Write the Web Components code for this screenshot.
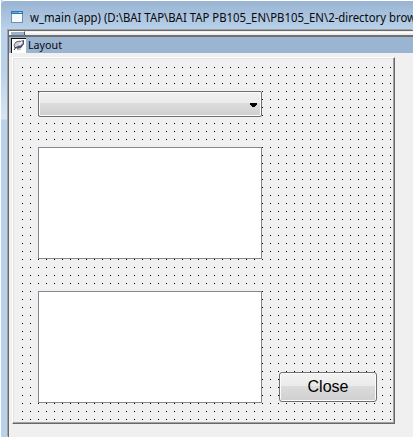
<!DOCTYPE html>
<html lang="en"><head><meta charset="utf-8"><title>w_main</title>
<style>html,body{margin:0;width:413px;height:437px;overflow:hidden;background:#fff}</style></head><body>
<app-window></app-window>
<script>
const define=(name,html)=>customElements.define(name,class extends HTMLElement{
  constructor(){super();this.attachShadow({mode:'open'}).innerHTML=html;}
});
customElements.define('fitted-label',class extends HTMLElement{
  constructor(){super();this.attachShadow({mode:'open'}).innerHTML=`<style>:host{display:block}svg{display:block;overflow:visible}text{font-family:"Noto Sans","Open Sans",sans-serif;font-size:12px;fill:#08080c}</style><svg height="16"><text y="13"></text></svg>`;}
  connectedCallback(){
    const s=this.shadowRoot.querySelector('svg'),t=s.firstChild,w=this.getAttribute('width');
    s.setAttribute('width',w);t.setAttribute('textLength',w);t.setAttribute('lengthAdjust','spacingAndGlyphs');
    if(this.hasAttribute('size'))t.style.fontSize=this.getAttribute('size')+'px';
    t.textContent=this.getAttribute('text');
  }
});
define('title-bar',`<style>:host{display:flex;height:29px;box-sizing:border-box;border-top:1px solid #fff;background:linear-gradient(#98b4d2,#b9d1ea);padding:8px 0 0 10px}
svg{display:block;margin-top:2px;flex:none}fitted-label{margin-left:7px;flex:none}</style>
<svg width="12" height="12" shape-rendering="crispEdges"><rect width="12" height="12" fill="#6d91a8"/><rect width="12" height="3" fill="#2876b4"/><rect x="1" y="1" width="7" height="1" fill="#63a8dc"/><rect x="8" y="1" width="3" height="1" fill="#b5d3eb"/><rect x="1" y="3" width="10" height="8" fill="#f3fafc"/></svg>
<fitted-label width="386" text="w_main (app) (D:\\BAI TAP\\BAI TAP PB105_EN\\PB105_EN\\2-directory brow"></fitted-label>`);
define('tool-strip',`<style>:host{display:block;height:4px;background:linear-gradient(#f0f0f0 0 1px,#fff 1px 2px,#eee 2px)}i{display:block;box-sizing:border-box;width:16px;height:4px;background:#9ab2ce;border:solid;border-width:1px 1px 0 2px;border-color:#fff #555 #555 #fff}</style><i></i>`);
define('layout-header',`<style>:host{display:flex;box-sizing:border-box;height:18px;background:#9ab4d2;border-top:2px solid #707070;padding-top:1px}
svg{display:block;flex:none;margin-left:2px}fitted-label{margin:-2px 0 0 2px}</style>
<svg width="15" height="15"><path fill="#fff" d="M0 0h15v15H0z"/><path fill="#111" d="M0 0h15v1H1v14H0z"/><path d="M3 7l2-3 4-1 1 3-2 3-4 1z" fill="#d0d0cc" stroke="#444" stroke-width=".8"/><path d="M9 3l4-1v4l-3 4-4 1-1-2 4-2z" fill="#4d4f78"/><path d="M9 4l2-1 1 2-3 3-1-1z" fill="#eee"/><path d="M3 12l2-3" stroke="#333"/><path d="M6 12l4-1" stroke="#aaa"/></svg>
<fitted-label width="34" size="11.5" text="Layout"></fitted-label>`);
define('drop-list',`<style>:host{display:flex;box-sizing:border-box;justify-content:flex-end;align-items:center;width:224px;height:26px;border:1px solid #707070;border-radius:2px;box-shadow:inset 0 0 0 1px #fbfbfb;background:linear-gradient(#f2f2f2,#ebebeb 46%,#dcdcdc 47%,#cfcfcf);padding-right:4px}svg{display:block;margin-top:2px}</style><svg width="7" height="4" shape-rendering="crispEdges"><path d="M0 0h7v2H6v1H5v1H2V3H1V2H0z"/></svg>`);
define('list-field',`<style>:host{display:block;box-sizing:border-box;width:224px;height:112px;background:#fff;border:1px solid #828790}</style>`);
define('push-button',`<style>:host{display:flex;box-sizing:border-box;width:98px;height:30px;align-items:center;justify-content:center;border:1px solid #707070;border-radius:3px;box-shadow:inset 0 0 0 1px #fbfbfb;background:linear-gradient(#f2f2f2,#ebebeb 46%,#dcdcdc 47%,#cfcfcf);font:16px "Liberation Sans",Arial,sans-serif;color:#000}</style><slot></slot>`);
define('form-canvas',`<style>:host{display:grid;box-sizing:border-box;width:383px;height:367px;border-top:1px solid #fff;border-left:1px solid #fff;border-right:1px solid #696969;border-bottom:1px solid #696969;box-shadow:inset -1px -1px #a0a0a0,inset 1px 1px #e3e3e3;background:#f0f0f0;padding:33px 16px 18px 25px;grid-template-columns:224px 98px;column-gap:17px;position:relative}
svg{position:absolute;left:0;top:0}main{display:flex;flex-direction:column;position:relative}list-field{margin-top:30px}list-field+list-field{margin-top:32px}push-button{align-self:end;position:relative;margin-bottom:3px}</style>
<svg width="381" height="365" shape-rendering="crispEdges"><defs><pattern id="p" x="9" y="9" width="8" height="8" patternUnits="userSpaceOnUse"><rect width="1" height="1"/></pattern></defs><rect x="9" y="9" width="370" height="354" fill="url(#p)"/></svg>
<main><drop-list></drop-list><list-field></list-field><list-field></list-field></main><push-button>Close</push-button>`);
define('app-window',`<style>:host{display:flex;flex-direction:column;box-sizing:border-box;width:413px;height:437px;border-left:1px solid #fff;overflow:hidden;background:#b9d1ea}
title-bar{border-top-left-radius:4px}.body{display:flex;flex:1}.edge{width:7px;background:linear-gradient(#b9d1ea,#b9d1ea 40px,#d6e5f5 90px,#b9d1ea 91px)}.pane{flex:1;min-width:0;margin-top:1px;background:#f0f0f0;border-left:1px solid #696969;border-top:1px solid #696969;box-shadow:-1px -1px #a0a0a0}form-canvas{margin:4px 0 0 3px}</style>
<title-bar></title-bar><div class="body"><div class="edge"></div><div class="pane"><tool-strip></tool-strip><layout-header></layout-header><form-canvas></form-canvas></div></div>`);
</script></body></html>
